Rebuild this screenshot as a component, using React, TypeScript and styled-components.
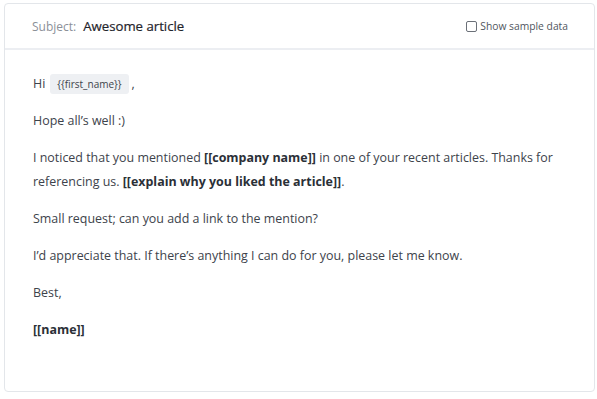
import React from 'react';
import styled, { createGlobalStyle } from 'styled-components';

const GlobalStyle = createGlobalStyle`
  body {
    margin: 0;
    background: #ffffff;
    font-family: 'Open Sans', 'Noto Sans', sans-serif;
  }
`;

const Page = styled.div`
  padding: 3px 2px 7px 4px;
`;

const Card = styled.div`
  height: 389px;
  box-sizing: border-box;
  border: 1px solid #e3e6ea;
  border-radius: 4px;
  background: #fff;
  display: flex;
  flex-direction: column;
`;

const Header = styled.div`
  height: 46px;
  box-sizing: border-box;
  border-bottom: 2px solid #eceef2;
  display: flex;
  align-items: center;
  justify-content: space-between;
  padding: 0 26px 0 27px;
`;

const Subject = styled.div`
  display: flex;
  align-items: baseline;
  gap: 7px;
`;

const SubjectLabel = styled.span`
  font-size: 12px;
  color: #8b9098;
`;

const SubjectValue = styled.span`
  font-size: 13.2px;
  color: #1f242b;
  font-weight: 500;
  -webkit-text-stroke: 0.2px #1f242b;
`;

const SampleToggle = styled.label`
  display: flex;
  align-items: center;
  gap: 3px;
  font-size: 10.3px;
  color: #50565e;
`;

const Box = styled.span`
  width: 9px;
  height: 9px;
  border: 1px solid #6b7078;
  border-radius: 2px;
`;

const Body = styled.div`
  padding: 22px 28px;
  font-size: 12.45px;
  line-height: 24px;
  color: #3d434b;
`;

const Para = styled.p`
  margin: 0 0 13px;
`;

const Token = styled.span`
  display: inline-block;
  background: #eef0f3;
  border-radius: 3px;
  font-size: 10px;
  line-height: 20px;
  padding: 0 7px;
  margin: 0 3px 0 5px;
  color: #3d434b;
`;

const Field = styled.b`
  font-weight: 700;
  color: #2b3037;
`;

export default function App() {
  return (
    <>
      <GlobalStyle />
      <Page>
        <Card>
          <Header>
            <Subject>
              <SubjectLabel>Subject:</SubjectLabel>
              <SubjectValue>Awesome article</SubjectValue>
            </Subject>
            <SampleToggle>
              <Box />
              Show sample data
            </SampleToggle>
          </Header>
          <Body>
            <Para>
              Hi<Token>{'{{first_name}}'}</Token>,
            </Para>
            <Para>Hope all’s well :)</Para>
            <Para>
              I noticed that you mentioned <Field>[[company name]]</Field> in one of your recent articles. Thanks for
              referencing us. <Field>[[explain why you liked the article]]</Field>.
            </Para>
            <Para>Small request; can you add a link to the mention?</Para>
            <Para>I’d appreciate that. If there’s anything I can do for you, please let me know.</Para>
            <Para>Best,</Para>
            <Para>
              <Field>[[name]]</Field>
            </Para>
          </Body>
        </Card>
      </Page>
    </>
  );
}
